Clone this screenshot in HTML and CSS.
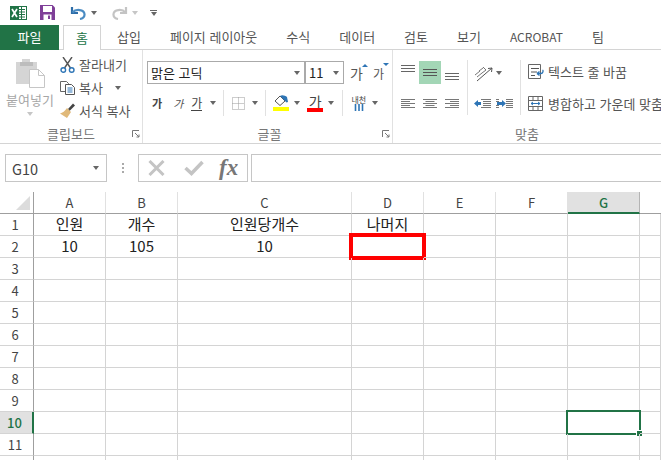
FILE: index.html
```html
<!DOCTYPE html>
<html lang="ko">
<head>
<meta charset="utf-8">
<title>Excel</title>
<link rel="stylesheet" href="styles.css">
</head>
<body>
<div class="app">
  <div class="qat">
    <svg class="q-excel" width="17" height="16" viewBox="0 0 17 16"><rect x="6" y="1.5" width="10.5" height="13" fill="#fff" stroke="#217346"/><path d="M9 4.5h6M9 7h6M9 9.5h6M9 12h6M11.5 2v12" stroke="#217346"/><rect y="1" width="9" height="14" fill="#217346"/><path d="M2 4l5 8M7 4l-5 8" stroke="#fff" stroke-width="1.7"/></svg>
    <svg class="q-save" width="15" height="15" viewBox="0 0 15 15"><path d="M0 0h12.5L15 2.5V15H0z" fill="#7f3f98"/><rect x="3" y="1" width="9" height="6" fill="#fff"/><rect x="3.5" y="9.5" width="8" height="5.5" fill="#fff"/><rect x="8" y="10.5" width="2" height="3.5" fill="#7f3f98"/></svg>
    <svg class="q-undo" width="16" height="14" viewBox="0 0 16 14"><path d="M2 1v6h6" fill="none" stroke="#2e6da8" stroke-width="2.2"/><path d="M2.5 6.5C6 2.5 14 3.5 14.5 8c.2 2.5-1.5 4.5-4.5 5" fill="none" stroke="#4a8bc2" stroke-width="2.2"/></svg>
    <span class="caret q-c1"></span>
    <svg class="q-redo" width="16" height="14" viewBox="0 0 16 14"><path d="M14 1v6H8" fill="none" stroke="#c4c4c4" stroke-width="2.2"/><path d="M13.5 6.500C10 2.500 2 3.500 1.500 8c-.2 2.500 1.500 4.500 4.500 5" fill="none" stroke="#c4c4c4" stroke-width="2.2"/></svg>
    <span class="caret caret-light q-c2"></span>
    <span class="q-more"><i class="q-bar"></i><span class="caret"></span></span>
  </div>

  <div class="tabs">
    <div class="tab-file">파일</div>
    <div class="tab-home">홈</div>
    <div class="tab tab-first">삽입</div>
    <div class="tab">페이지 레이아웃</div>
    <div class="tab">수식</div>
    <div class="tab">데이터</div>
    <div class="tab">검토</div>
    <div class="tab">보기</div>
    <div class="tab tab-latin">ACROBAT</div>
    <div class="tab">팀</div>
  </div>

  <div class="ribbon">
    <section class="group g-clip">
      <div class="clip-body">
        <div class="paste">
          <svg width="30" height="30" viewBox="0 0 30 30"><path d="M1 4h6V1h8v3h7v22H1z" fill="#d5d5d5"/><rect x="5" y="4" width="13" height="4" fill="#bdbdbd"/><path d="M14.500 11.500h9l6 6v12h-15z" fill="#fff" stroke="#c6c6c6"/><path d="M23.500 11.500v6h6" fill="none" stroke="#c6c6c6"/></svg>
          <span class="paste-label">붙여넣기</span>
          <span class="caret caret-light"></span>
        </div>
        <div class="clip-cmds">
          <div class="cmd">
            <svg class="cmd-ico" width="15" height="16" viewBox="0 0 15 16"><path d="M3 0l7.500 11M12 0L4.500 11" stroke="#555" stroke-width="1.400"/><circle cx="3.300" cy="13" r="2.300" fill="none" stroke="#2e75b6" stroke-width="1.400"/><circle cx="11.700" cy="13" r="2.300" fill="none" stroke="#2e75b6" stroke-width="1.400"/></svg>
            <span>잘라내기</span>
          </div>
          <div class="cmd">
            <svg class="cmd-ico" width="15" height="14" viewBox="0 0 15 14"><path d="M.5.500h6l2 2v8H.5z" fill="#fff" stroke="#666"/><path d="M5.500 3.500h6l3 3v7h-9z" fill="#fff" stroke="#555"/><path d="M7.500 7h5M7.500 9h5M7.500 11h5" stroke="#2e75b6"/></svg>
            <span>복사</span>
            <span class="caret cmd-caret"></span>
          </div>
          <div class="cmd">
            <svg class="cmd-ico" width="15" height="15" viewBox="0 0 15 15"><path d="M8 6l5-5.500 2 2L9.500 8z" fill="#444"/><path d="M7 5l4 4-4 6-7-4.500c2.500-.5 5-2.500 7-5.500z" fill="#e0b97a"/></svg>
            <span>서식 복사</span>
          </div>
        </div>
      </div>
      <div class="group-label">클립보드</div>
      <svg class="launcher" width="8" height="8" viewBox="0 0 8 8"><path d="M.5 7V.5H7M3 3l4 4M4.500 7H7V4.500" fill="none" stroke="#777"/></svg>
    </section>

    <section class="group g-font">
      <div class="font-row1">
        <div class="fontbox"><span>맑은 고딕</span><span class="caret"></span></div>
        <div class="sizebox"><span>11</span><span class="caret"></span></div>
        <span class="grow"><span class="ga ga-lg">가</span><i class="tri-up"></i></span>
        <span class="shrink"><span class="ga ga-sm">가</span><i class="tri-down"></i></span>
      </div>
      <div class="font-row2">
        <b class="f-b">가</b>
        <i class="f-i">가</i>
        <span class="f-u">가</span>
        <span class="caret f-c1"></span>
        <i class="vsep f-s1"></i>
        <svg class="f-border" width="13" height="13" viewBox="0 0 13 13"><path d="M.5.500h12v12H.5zM6.500.500v12M.5 6.500h12" fill="none" stroke="#9a9a9a" stroke-dasharray="1 1"/></svg>
        <span class="caret f-c2"></span>
        <i class="vsep f-s2"></i>
        <span class="f-fill">
          <svg width="16" height="11" viewBox="0 0 16 11"><path d="M2 6l5-5 5 5-5 4.500z" fill="#fff" stroke="#555"/><path d="M7 1c2-1.500 5-.5 7 1l1 5-1.500.5L12 6z" fill="#2e75b6"/></svg>
          <i class="swatch sw-y"></i>
        </span>
        <span class="caret f-c3"></span>
        <span class="f-color"><span class="ga-c">가</span><i class="swatch sw-r"></i></span>
        <span class="caret f-c4"></span>
        <i class="vsep f-s3"></i>
        <span class="f-ruby"><span class="ruby-t">내천</span><svg width="10" height="7" viewBox="0 0 10 7"><path d="M1.500 0v7M5 0v7M8.500 0v7" stroke="#2e75b6" stroke-width="1.600"/></svg></span>
        <span class="caret f-c5"></span>
      </div>
      <div class="group-label">글꼴</div>
      <svg class="launcher" width="8" height="8" viewBox="0 0 8 8"><path d="M.5 7V.5H7M3 3l4 4M4.500 7H7V4.500" fill="none" stroke="#777"/></svg>
    </section>

    <section class="group g-align">
      <div class="align-body">
        <div class="a-grid">
          <span class="a-cell a-top"><svg width="14" height="7" viewBox="0 0 14 7"><path d="M0 .5h14M0 3.500h14M0 6.500h14" stroke="#666"/></svg></span>
          <span class="a-cell a-on"><svg width="14" height="7" viewBox="0 0 14 7"><path d="M0 .5h14M0 3.500h14M0 6.500h14" stroke="#555"/></svg></span>
          <span class="a-cell a-bot"><svg width="14" height="7" viewBox="0 0 14 7"><path d="M0 .5h14M0 3.500h14M0 6.500h14" stroke="#666"/></svg></span>
          <span class="a-cell"><svg width="14" height="9" viewBox="0 0 14 9"><path d="M0 .5h14M0 2.500h9M0 4.500h14M0 6.500h9M0 8.500h14" stroke="#777"/></svg></span>
          <span class="a-cell"><svg width="14" height="9" viewBox="0 0 14 9"><path d="M0 .5h14M2.500 2.500h9M0 4.500h14M2.500 6.500h9M0 8.500h14" stroke="#777"/></svg></span>
          <span class="a-cell"><svg width="14" height="9" viewBox="0 0 14 9"><path d="M0 .5h14M5 2.500h9M0 4.500h14M5 6.500h9M0 8.500h14" stroke="#777"/></svg></span>
        </div>
        <i class="vsep a-sep"></i>
        <div class="a-mid">
          <div class="a-orient">
            <svg width="20" height="18" viewBox="0 0 20 18"><path d="M3 17L18 4M18 4l-4 .5M18 4l-.5 4" fill="none" stroke="#555"/><path d="M1 11l5-4M3 13l5-4M5 7l4-3M8 9l4-3M9 3l3 3" stroke="#777"/></svg>
            <span class="caret"></span>
          </div>
          <div class="a-indent">
            <svg width="17" height="9" viewBox="0 0 17 9"><path d="M7 .5h10M9 2.500h8M9 4.500h8M9 6.500h8M7 8.500h10" stroke="#777"/><path d="M0 4.500L4 1v2h3v3H4v2z" fill="#2e75b6"/></svg>
            <svg width="17" height="9" viewBox="0 0 17 9"><path d="M0 .5h3M0 2.500h3M0 6.500h3M0 8.500h3M10 .5h7M10 2.500h7M10 4.500h7M10 6.500h7M10 8.500h7" stroke="#777"/><path d="M10 4.500L6 1v2H1v3h5v2z" fill="#2e75b6"/></svg>
          </div>
        </div>
        <i class="vsep a-sep2"></i>
        <div class="a-cmds">
          <div class="a-cmd a-cmd1">
            <svg width="16" height="15" viewBox="0 0 16 15"><path d="M.5.500h12v14H.5z" fill="none" stroke="#666"/><path d="M3 4.500h8M3 8h6M3 11.500h4" stroke="#555"/><path d="M9 9.500h4c2 0 2.500-3 1.500-3.500M9 9.500l2.500-2M9 9.500l2.500 2" fill="none" stroke="#2e75b6" stroke-width="1.300"/></svg>
            <span>텍스트 줄 바꿈</span>
          </div>
          <div class="a-cmd a-cmd2">
            <svg width="15" height="15" viewBox="0 0 15 15"><path d="M.5.500h14v14H.5zM.5 4.500h14M.5 10.500h14M5 .500v4M10 .500v4M5 10.500v4M10 10.500v4" fill="none" stroke="#666"/><path d="M3 7.500h9M3 7.500l2-1.500M3 7.500L5 9M12 7.500L10 6M12 7.500L10 9" fill="none" stroke="#2e75b6"/></svg>
            <span>병합하고 가운데 맞춤</span>
          </div>
        </div>
      </div>
      <div class="group-label">맞춤</div>
    </section>
  </div>

  <div class="fbar">
    <div class="namebox"><span>G10</span><span class="caret"></span></div>
    <div class="fbar-grip"><i></i><i></i><i></i></div>
    <div class="fbtns">
      <svg width="17" height="16" viewBox="0 0 17 16"><path d="M1.500 1l14 14M15.500 1l-14 14" stroke="#c4c4c4" stroke-width="3"/></svg>
      <svg width="20" height="16" viewBox="0 0 20 16"><path d="M1.500 8l6 5.500L18.500 2" fill="none" stroke="#c4c4c4" stroke-width="3.500"/></svg>
      <span class="fx">fx</span>
    </div>
    <div class="finput"></div>
  </div>

  <div class="sheet">
    <div class="ch corner"><i class="corner-tri"></i></div>
    <div class="ch">A</div><div class="ch">B</div><div class="ch">C</div><div class="ch">D</div><div class="ch">E</div><div class="ch">F</div><div class="ch ch-on">G</div><div class="ch ch-end"></div>

    <div class="rh">1</div><div class="c">인원</div><div class="c">개수</div><div class="c">인원당개수</div><div class="c">나머지</div><div class="c"></div><div class="c"></div><div class="c"></div><div class="c"></div>
    <div class="rh">2</div><div class="c">10</div><div class="c">105</div><div class="c">10</div><div class="c c-red"><i class="red-box"></i></div><div class="c"></div><div class="c"></div><div class="c"></div><div class="c"></div>
    <div class="rh">3</div><div class="c"></div><div class="c"></div><div class="c"></div><div class="c"></div><div class="c"></div><div class="c"></div><div class="c"></div><div class="c"></div>
    <div class="rh">4</div><div class="c"></div><div class="c"></div><div class="c"></div><div class="c"></div><div class="c"></div><div class="c"></div><div class="c"></div><div class="c"></div>
    <div class="rh">5</div><div class="c"></div><div class="c"></div><div class="c"></div><div class="c"></div><div class="c"></div><div class="c"></div><div class="c"></div><div class="c"></div>
    <div class="rh">6</div><div class="c"></div><div class="c"></div><div class="c"></div><div class="c"></div><div class="c"></div><div class="c"></div><div class="c"></div><div class="c"></div>
    <div class="rh">7</div><div class="c"></div><div class="c"></div><div class="c"></div><div class="c"></div><div class="c"></div><div class="c"></div><div class="c"></div><div class="c"></div>
    <div class="rh">8</div><div class="c"></div><div class="c"></div><div class="c"></div><div class="c"></div><div class="c"></div><div class="c"></div><div class="c"></div><div class="c"></div>
    <div class="rh">9</div><div class="c"></div><div class="c"></div><div class="c"></div><div class="c"></div><div class="c"></div><div class="c"></div><div class="c"></div><div class="c"></div>
    <div class="rh rh-on">10</div><div class="c"></div><div class="c"></div><div class="c"></div><div class="c"></div><div class="c"></div><div class="c"></div><div class="c c-sel"><i class="sel-box"></i><i class="sel-handle"></i></div><div class="c"></div>
    <div class="rh">11</div><div class="c"></div><div class="c"></div><div class="c"></div><div class="c"></div><div class="c"></div><div class="c"></div><div class="c"></div><div class="c"></div>
    <div class="rh"></div><div class="c"></div><div class="c"></div><div class="c"></div><div class="c"></div><div class="c"></div><div class="c"></div><div class="c"></div><div class="c"></div>
  </div>
</div>
</body>
</html>
```

FILE: styles.css
```css
* { box-sizing: border-box; }
html, body { margin: 0; padding: 0; background: #fff; }
body { width: 661px; height: 460px; overflow: hidden; font-family: "Noto Sans CJK KR", "Noto Sans", sans-serif; color: #555; font-size: 13px; }
i { font-style: normal; display: block; }
svg { display: block; flex: none; }
.app { width: 661px; height: 460px; overflow: hidden; }

.caret { display: block; width: 0; height: 0; flex: none; border-left: 3.5px solid transparent; border-right: 3.5px solid transparent; border-top: 4px solid #666; }
.caret-light { border-top-color: #c6c6c6; }

/* quick access */
.qat { height: 25px; display: flex; align-items: center; }
.q-excel { margin-left: 10px; }
.q-save { margin-left: 13px; }
.q-undo { margin-left: 15px; }
.q-c1 { margin-left: 5px; }
.q-redo { margin-left: 15px; }
.q-c2 { margin-left: 4px; }
.q-more { margin-left: 12px; display: flex; flex-direction: column; gap: 1px; align-items: center; }
.q-bar { width: 7px; height: 1px; background: #666; }

/* tabs */
.tabs { height: 25px; display: flex; border-bottom: 1px solid #d4d4d4; line-height: 24px; white-space: nowrap; }
.tab-file { width: 59px; height: 25px; background: #217346; color: #fff; text-align: center; }
.tab-home { width: 38px; height: 25px; margin-left: 4px; border: 1px solid #d4d4d4; border-bottom: 0; background: #fff; color: #217346; text-align: center; line-height: 23px; }
.tab { margin-left: 29px; color: #555; flex: none; }
.tab-first { margin-left: 16px; }
.tab-latin { font-size: 12px; }

/* ribbon */
.ribbon { height: 94px; display: flex; border-bottom: 1px solid #d4d4d4; overflow: hidden; }
.group { position: relative; height: 93px; display: flex; flex-direction: column; flex: none; }
.g-clip { width: 143px; border-right: 1px solid #e1e1e1; }
.g-font { width: 250px; border-right: 1px solid #e1e1e1; padding-left: 4px; }
.g-align { width: 268px; }
.group-label { margin-top: auto; height: 18px; line-height: 18px; text-align: center; color: #777; }
.launcher { position: absolute; right: 2px; bottom: 5px; }

/* clipboard */
.clip-body { display: flex; height: 75px; }
.paste { width: 60px; display: flex; flex-direction: column; align-items: center; padding-top: 8px; }
.paste-label { color: #a6a6a6; margin-top: 3px; line-height: 18px; white-space: nowrap; }
.paste .caret { margin-top: 3px; }
.clip-cmds { display: flex; flex-direction: column; padding-top: 3px; }
.cmd { height: 23px; display: flex; align-items: center; gap: 4px; white-space: nowrap; }
.cmd-ico { width: 15px; }
.cmd-caret { margin-left: 8px; }

/* font */
.font-row1 { display: flex; align-items: center; margin-top: 11px; height: 23px; }
.fontbox, .sizebox { height: 23px; border: 1px solid #aaa; display: flex; align-items: center; justify-content: space-between; color: #222; padding: 0 4px 0 3px; font-size: 13px; }
.fontbox { width: 158px; }
.sizebox { width: 39px; }
.grow, .shrink { display: flex; position: relative; }
.grow { margin-left: 6px; width: 23px; }
.shrink { width: 14px; }
.ga { color: #555; line-height: 20px; }
.ga-lg { font-size: 14px; }
.ga-sm { font-size: 12px; padding-top: 2px; }
.tri-up, .tri-down { width: 0; height: 0; margin-top: 1px; margin-left: -1px; border-left: 3px solid transparent; border-right: 3px solid transparent; }
.tri-up { border-bottom: 3px solid #2e75b6; }
.tri-down { border-top: 3px solid #2e75b6; }
.font-row2 { display: flex; align-items: center; height: 26px; margin-top: 6px; }
.f-b { margin-left: 5px; font-size: 11px; color: #444; }
.f-i { margin-left: 11px; font-size: 11px; font-style: italic; color: #555; }
.f-u { margin-left: 8px; font-size: 12px; color: #444; border-bottom: 1px solid #444; line-height: 14px; }
.f-c1 { margin-left: 8px; }
.vsep { width: 1px; background: #e1e1e1; flex: none; }
.font-row2 .vsep { height: 26px; }
.f-s1 { margin-left: 7px; }
.f-border { margin-left: 8px; }
.f-c2 { margin-left: 7px; }
.f-s2 { margin-left: 7px; }
.f-fill { margin-left: 7px; display: flex; flex-direction: column; gap: 1px; }
.swatch { height: 4px; width: 16px; }
.sw-y { background: #ffff00; }
.sw-r { background: #ff0000; }
.f-c3 { margin-left: 5px; }
.f-color { margin-left: 7px; display: flex; flex-direction: column; align-items: center; }
.ga-c { font-size: 14px; line-height: 14px; color: #444; }
.f-c4 { margin-left: 5px; }
.f-s3 { margin-left: 8px; }
.f-ruby { margin-left: 8px; width: 15px; display: flex; flex-direction: column; align-items: center; }
.ruby-t { font-size: 8px; line-height: 9px; color: #444; white-space: nowrap; }
.f-c5 { margin-left: 6px; }

/* alignment */
.align-body { display: flex; height: 75px; padding-left: 4px; }
.a-grid { display: grid; flex: none; grid-template-columns: repeat(3, 22px); grid-template-rows: 23px 23px; row-gap: 8px; margin-top: 11px; }
.a-cell { display: flex; justify-content: center; align-items: center; }
.a-top { align-items: flex-start; padding-top: 4px; }
.a-bot { align-items: flex-end; padding-bottom: 4px; }
.a-on { background: #a3d6b6; }
.a-sep, .a-sep2 { height: 55px; margin-top: 10px; }
.a-sep { margin-left: 4px; }
.a-mid { width: 52px; flex: none; display: flex; flex-direction: column; }
.a-orient { display: flex; align-items: center; gap: 2px; height: 23px; margin-top: 11px; padding-left: 6px; }
.a-indent { display: flex; gap: 5px; align-items: center; height: 23px; margin-top: 8px; padding-left: 6px; }
.a-cmds { padding-left: 7px; flex: none; display: flex; flex-direction: column; white-space: nowrap; }
.a-cmd { display: flex; align-items: center; gap: 4px; height: 23px; }
.a-cmd1 { margin-top: 10px; }
.a-cmd2 { margin-top: 9px; }
.a-cmd2 span { margin-left: 1px; }

/* formula bar */
.fbar { height: 28px; margin-top: 10px; display: flex; }
.namebox { width: 102px; margin-left: 5px; border: 1px solid #c6c6c6; display: flex; align-items: center; justify-content: space-between; padding: 0 7px 0 6px; font-size: 14.500px; color: #444; }
.fbar-grip { width: 31px; display: flex; flex-direction: column; justify-content: center; align-items: center; gap: 2px; }
.fbar-grip i { width: 2px; height: 2px; background: #aaa; }
.fbtns { width: 110px; border: 1px solid #c6c6c6; display: flex; align-items: center; padding-left: 9px; gap: 0; }
.fbtns svg + svg { margin-left: 19px; }
.fx { margin-left: 15px; font-family: "Liberation Serif", serif; font-style: italic; font-weight: bold; font-size: 23px; line-height: 24px; color: #777; }
.finput { flex: 1; margin-left: 3px; border: 1px solid #c6c6c6; border-right: 0; }

/* sheet */
.sheet { margin-top: 10px; display: grid; grid-template-columns: 34px 72px 72px 174px 72px 72px 72px 72px 21px; grid-auto-rows: 22px; }
.ch { border-bottom: 1px solid #9f9f9f; border-right: 1px solid #e1e1e1; text-align: center; line-height: 21px; font-size: 13px; color: #444; }
.corner { border-right: 1px solid #9f9f9f; position: relative; }
.corner-tri { position: absolute; right: 3px; bottom: 3px; width: 0; height: 0; border-left: 14px solid transparent; border-bottom: 14px solid #dcdcdc; }
.ch-on { background: #e1e1e1; color: #217346; font-weight: 500; border-bottom: 2px solid #217346; border-right-color: #b4b4b4; }
.ch-end { border-right: 0; }
.rh { border-right: 1px solid #9f9f9f; border-bottom: 1px solid #d4d4d4; text-align: center; line-height: 21px; font-size: 13px; color: #444; padding-right: 3px; }
.rh-on { background: #e1e1e1; color: #217346; font-weight: 500; border-right: 2px solid #217346; }
.c { position: relative; border-right: 1px solid #d4d4d4; border-bottom: 1px solid #d4d4d4; text-align: center; font-size: 15px; line-height: 20px; color: #222; white-space: nowrap; }
.red-box { position: absolute; left: -3px; top: -3px; width: 77px; height: 27px; border: 4px solid #ff0000; }
.sel-box { position: absolute; left: -2px; top: -2px; width: 75px; height: 25px; border: 2px solid #217346; }
.sel-handle { position: absolute; right: -3px; bottom: -3px; width: 6px; height: 6px; background: #217346; border: 1px solid #fff; border-width: 1px 0 0 1px; }
```
